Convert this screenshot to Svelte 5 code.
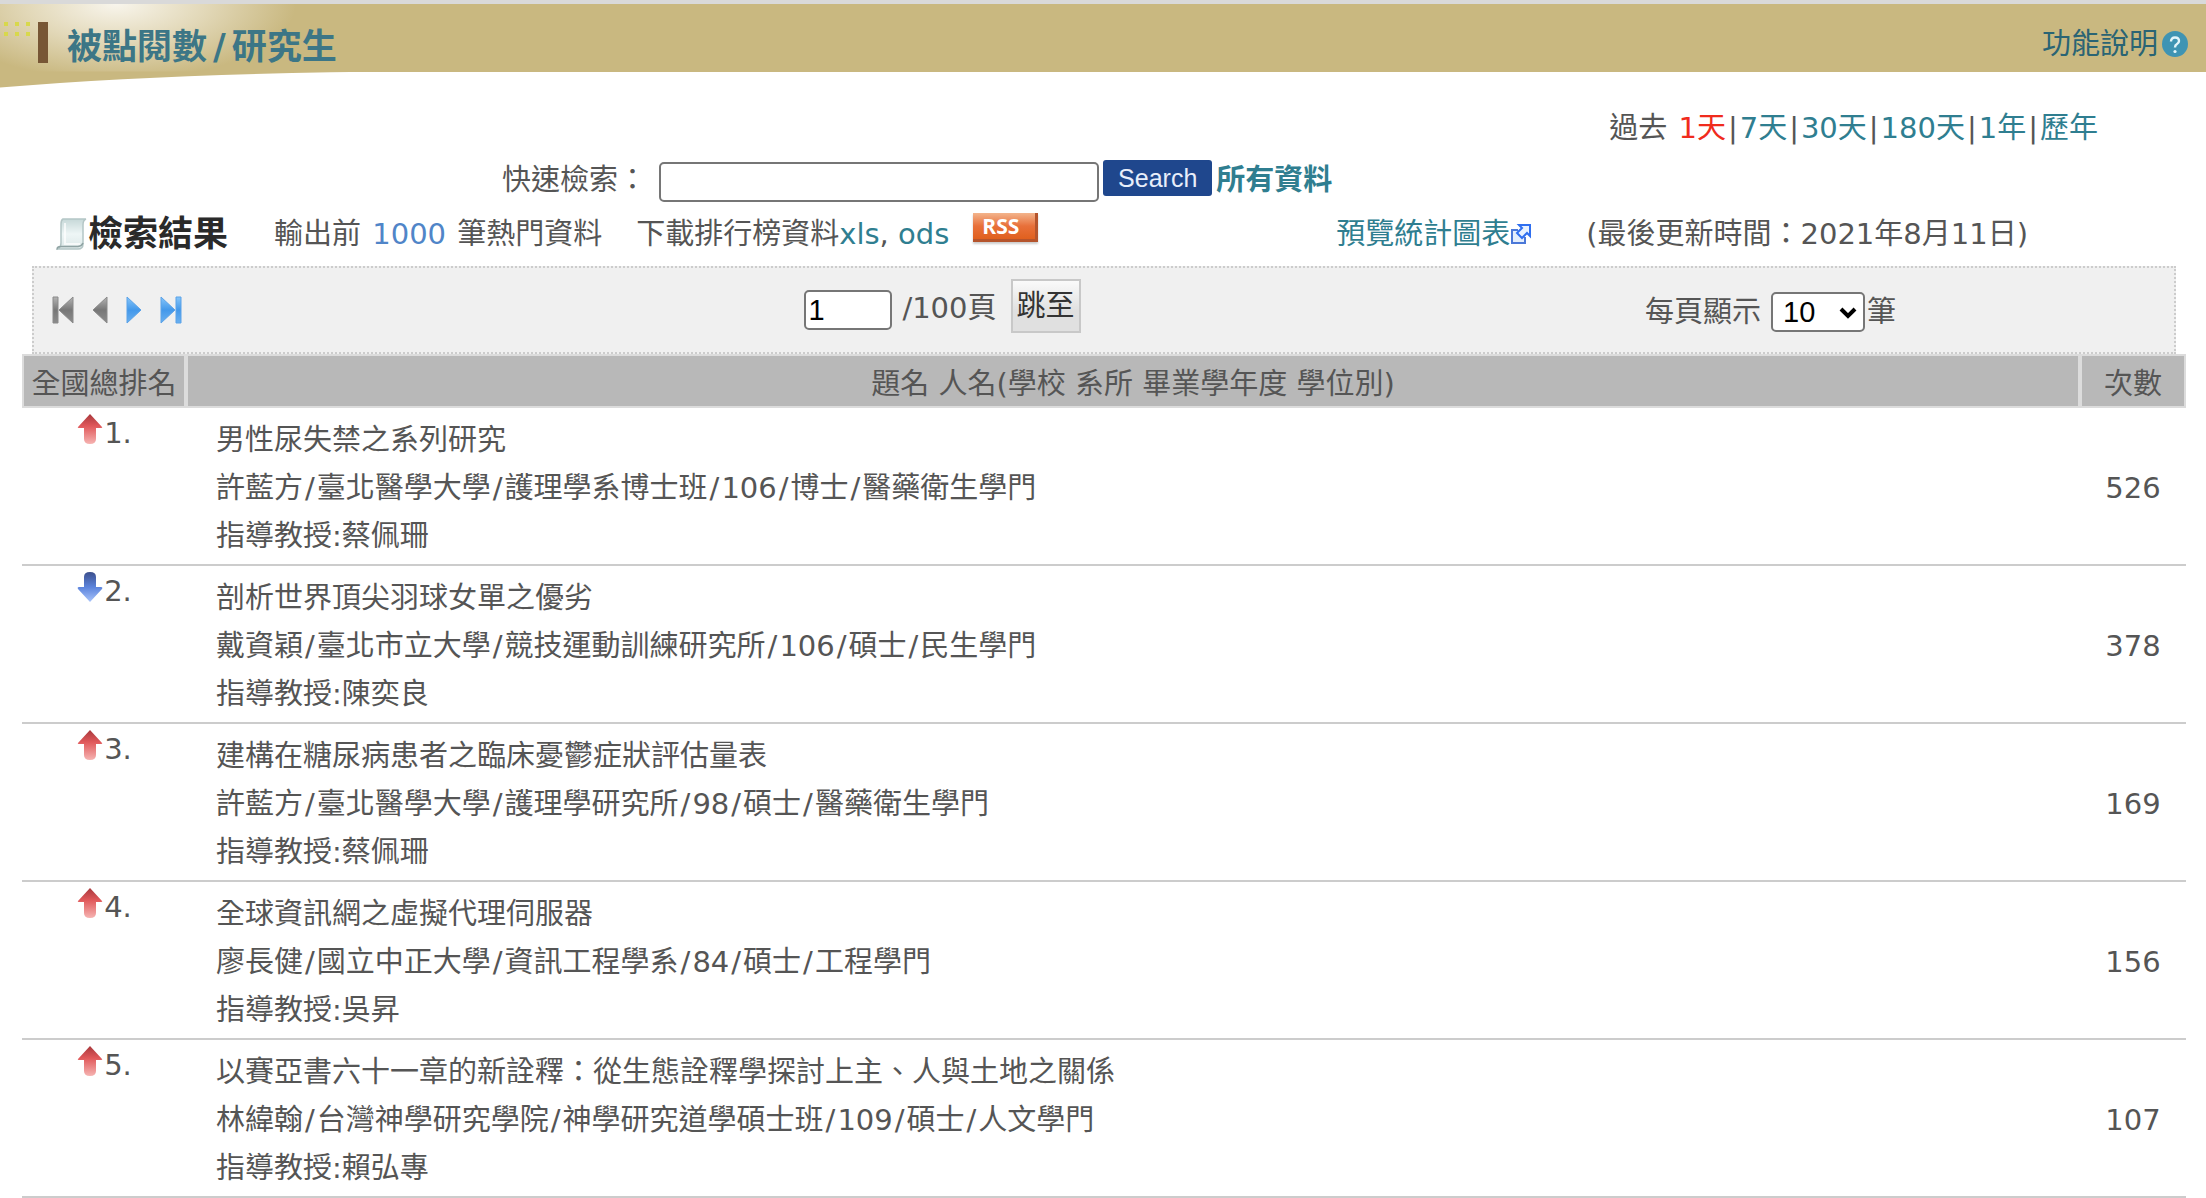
<script lang="ts">
  type Row = {
    rank: number;
    trend: 'up' | 'down';
    title: string;
    detail: string[];
    advisor: string;
    hits: number;
  };

  const ranges = ['1天', '7天', '30天', '180天', '1年', '歷年'];
  let range = $state('1天');
  let keyword = $state('');
  let page = $state('1');
  let pageSize = $state('10');

  const rows: Row[] = [
    { rank: 1, trend: 'up', title: '男性尿失禁之系列研究', detail: ['許藍方', '臺北醫學大學', '護理學系博士班', '106', '博士', '醫藥衛生學門'], advisor: '蔡佩珊', hits: 526 },
    { rank: 2, trend: 'down', title: '剖析世界頂尖羽球女單之優劣', detail: ['戴資穎', '臺北市立大學', '競技運動訓練研究所', '106', '碩士', '民生學門'], advisor: '陳奕良', hits: 378 },
    { rank: 3, trend: 'up', title: '建構在糖尿病患者之臨床憂鬱症狀評估量表', detail: ['許藍方', '臺北醫學大學', '護理學研究所', '98', '碩士', '醫藥衛生學門'], advisor: '蔡佩珊', hits: 169 },
    { rank: 4, trend: 'up', title: '全球資訊網之虛擬代理伺服器', detail: ['廖長健', '國立中正大學', '資訊工程學系', '84', '碩士', '工程學門'], advisor: '吳昇', hits: 156 },
    { rank: 5, trend: 'up', title: '以賽亞書六十一章的新詮釋：從生態詮釋學探討上主、人與土地之關係', detail: ['林緯翰', '台灣神學研究學院', '神學研究道學碩士班', '109', '碩士', '人文學門'], advisor: '賴弘專', hits: 107 }
  ];
</script>

<svg class="defs" width="0" height="0" aria-hidden="true">
  <defs>
    <linearGradient id="red" x1="0" y1="0" x2="0" y2="1">
      <stop offset="0" stop-color="#a8383c" />
      <stop offset="0.4" stop-color="#e0585a" />
      <stop offset="1" stop-color="#f6b4b2" />
    </linearGradient>
    <linearGradient id="blue" x1="0" y1="0" x2="0" y2="1">
      <stop offset="0" stop-color="#3c4f8c" />
      <stop offset="0.5" stop-color="#5b83dc" />
      <stop offset="1" stop-color="#a9c4fa" />
    </linearGradient>
    <linearGradient id="grey-nav" x1="0" y1="0" x2="0" y2="1">
      <stop offset="0" stop-color="#b4b4b4" />
      <stop offset="0.5" stop-color="#777" />
      <stop offset="1" stop-color="#8c8c8c" />
    </linearGradient>
    <linearGradient id="blue-nav" x1="0" y1="0" x2="0" y2="1">
      <stop offset="0" stop-color="#86c6fa" />
      <stop offset="0.5" stop-color="#4398ea" />
      <stop offset="1" stop-color="#6ab0f0" />
    </linearGradient>
    <linearGradient id="paper" x1="0" y1="0" x2="0" y2="1">
      <stop offset="0" stop-color="#c6d8d8" />
      <stop offset="0.5" stop-color="#eef6f6" />
      <stop offset="1" stop-color="#dce8e8" />
    </linearGradient>
  </defs>
</svg>

<header class="banner">
  <div class="banner-bg"></div>
  <svg class="curve" viewBox="0 0 410 16" aria-hidden="true">
    <path d="M0 0H410Q180 1 0 16Z" fill="#c9b880" />
  </svg>
  <svg class="dots" viewBox="0 0 28 16" aria-hidden="true">
    <path d="M2 2h4v4H2zM13 2h4v4h-4zM24 2h4v4h-4zM2 12h4v4H2zM13 12h4v4h-4zM24 12h4v4h-4z" fill="#d8d84c" />
  </svg>
  <span class="marker"></span>
  <h1>被點閱數<span>/</span>研究生</h1>
  <a class="help" href="#help">
    功能說明
    <svg width="26" height="26" viewBox="0 0 26 26" aria-hidden="true">
      <circle cx="13" cy="13" r="13" fill="#3f94b3" />
      <path d="M9 10.500Q9 6.500 13 6.500T17 10Q17 12 15 13T13 16.500" fill="none" stroke="#e4f5fa" stroke-width="2.400" />
      <circle cx="13" cy="20.500" r="1.600" fill="#e4f5fa" />
    </svg>
  </a>
</header>

<main>
  <nav class="ranges">
    過去&nbsp;{#each ranges as r, i}{#if i > 0}|{/if}<a href="#range" class:current={r === range} onclick={() => (range = r)}>{r}</a>{/each}
  </nav>

  <form class="search" onsubmit={(e) => e.preventDefault()}>
    <label for="keyword">快速檢索：</label>
    <input id="keyword" type="text" bind:value={keyword} />
    <button type="submit">Search</button>
    <a href="#all">所有資料</a>
  </form>

  <div class="tools">
    <h2>
      <svg width="32" height="34" viewBox="0 0 32 34" aria-hidden="true">
        <path d="M7 2H30Q27 3 27 8V27Q27 32 22 32H2Q5 30 5 26V7Q5 3 7 2Z" fill="url(#paper)" stroke="#b4c6c6" stroke-width="1.500" />
        <path d="M9 6V27H24" fill="none" stroke="#fff" stroke-width="2" opacity="0.7" />
        <path d="M1 32.500Q1 29 6 29.500H22Q26 29 27 26" fill="none" stroke="#8fa3a3" stroke-width="1.500" />
      </svg>檢索結果
    </h2>
    <span class="export">輸出前 <b>1000</b> 筆熱門資料</span>
    <span class="download">下載排行榜資料<a href="#xls">xls</a>, <a href="#ods">ods</a></span>
    <a class="rss" href="#rss">RSS</a>
    <a class="preview" href="#chart">
      預覽統計圖表<svg width="22" height="22" viewBox="0 0 22 22" aria-hidden="true">
        <path d="M8 7H2V20H15V14" fill="#e4eefc" stroke="#4b78d8" stroke-width="2" />
        <path d="M9 2H20V13L17 10L12 15L7 10L12 5Z" fill="#e8f2ff" stroke="#2f6ff0" stroke-width="2" />
      </svg>
    </a>
    <span class="updated">(最後更新時間：2021年8月11日)</span>
  </div>

  <div class="pager">
    <div class="steps">
      <button type="button" aria-label="第一頁">
        <svg width="22" height="28" viewBox="0 0 22 28"><path d="M1 1H6V27H1ZM21 1V27L7 14Z" fill="url(#grey-nav)" stroke="#8a8a8a" /></svg>
      </button>
      <button type="button" aria-label="上一頁">
        <svg width="16" height="28" viewBox="0 0 16 28"><path d="M15 1V27L1 14Z" fill="url(#grey-nav)" stroke="#8a8a8a" /></svg>
      </button>
      <button type="button" aria-label="下一頁">
        <svg width="16" height="28" viewBox="0 0 16 28"><path d="M1 1V27L15 14Z" fill="url(#blue-nav)" stroke="#5aa2e8" /></svg>
      </button>
      <button type="button" aria-label="最後頁">
        <svg width="22" height="28" viewBox="0 0 22 28"><path d="M21 1H16V27H21ZM1 1V27L15 14Z" fill="url(#blue-nav)" stroke="#5aa2e8" /></svg>
      </button>
    </div>
    <div class="jump">
      <input type="text" aria-label="頁碼" bind:value={page} />
      <span>/100頁</span>
      <button type="button">跳至</button>
    </div>
    <div class="size">
      <label for="size">每頁顯示</label>
      <span class="select">
        <select id="size" bind:value={pageSize}>
          <option>10</option>
          <option>20</option>
          <option>50</option>
        </select>
        <svg width="18" height="12" viewBox="0 0 18 12" aria-hidden="true"><path d="M2 2L9 9L16 2" fill="none" stroke="#000" stroke-width="4" /></svg>
      </span>
      <span>筆</span>
    </div>
  </div>

  <table>
    <thead>
      <tr>
        <th class="col-rank">全國總排名</th>
        <th>題名 人名(學校 系所 畢業學年度 學位別)</th>
        <th class="col-hits">次數</th>
      </tr>
    </thead>
    <tbody>
      {#each rows as row}
        <tr>
          <td class="rank">
            <div>
              {#if row.trend === 'up'}
                <svg width="28" height="32" viewBox="0 0 28 32" aria-hidden="true"><path d="M14 1L26 14Q27 15 25 15H20V26Q20 31 14 31T8 26V15H3Q1 15 2 14Z" fill="url(#red)" /></svg>
              {:else}
                <svg width="28" height="32" viewBox="0 0 28 32" aria-hidden="true"><path d="M14 31L26 18Q27 16 25 16H20V6Q20 1 14 1T8 6V16H3Q1 16 2 18Z" fill="url(#blue)" /></svg>
              {/if}
              <span>{row.rank}.</span>
            </div>
          </td>
          <td class="thesis">
            <div>{row.title}</div>
            <div>{#each row.detail as part, i}{#if i > 0}<span class="slash">/</span>{/if}{part}{/each}</div>
            <div>指導教授:{row.advisor}</div>
          </td>
          <td class="hits">{row.hits}</td>
        </tr>
      {/each}
    </tbody>
  </table>
</main>

<style>
  :global(body) {
    margin: 0;
    background: #fff;
    color: #555;
    font: 29px/48px 'DejaVu Sans', 'Noto Sans CJK TC', sans-serif;
  }

  a {
    color: #2f7e90;
    text-decoration: none;
  }

  .defs {
    position: absolute;
  }

  .banner {
    position: relative;
    display: flex;
    align-items: center;
    height: 68px;
    padding: 0 18px 0 38px;
    border-top: 4px solid #d9d9d9;
  }

  .banner-bg {
    position: absolute;
    z-index: -1;
    inset: 0;
    background: radial-gradient(ellipse 180px 76px at 116px 0, #f8f5ec, #e2d8b8 50%, transparent), #c9b880;
  }

  .curve {
    position: absolute;
    top: 67px;
    left: 0;
    width: 410px;
    height: 17px;
  }

  .dots {
    position: absolute;
    top: 16px;
    left: 2px;
    width: 28px;
    height: 16px;
  }

  .marker {
    width: 10px;
    height: 41px;
    margin-top: 8px;
    background: #775635;
  }

  h1 {
    margin: 18px auto 0 19px;
    color: #3c7686;
    font-size: 35px;
    line-height: 48px;
  }

  h1 span {
    margin: 0 6px;
  }

  .help {
    display: flex;
    align-items: center;
    gap: 4px;
    margin-top: 12px;
    color: #2a6474;
  }

  main {
    padding: 32px 20px 0 22px;
  }

  .ranges {
    padding-right: 86px;
    text-align: right;
  }

  .ranges a {
    margin: 0 2px;
  }

  .ranges .current {
    color: #f02b1d;
  }

  .search {
    display: flex;
    align-items: center;
    padding-left: 22%;
    margin: 4px 0 0 4px;
  }

  .search input,
  .jump input,
  select {
    box-sizing: border-box;
    height: 40px;
    border: 2px solid #767676;
    border-radius: 5px;
    background: #fff;
    color: #000;
    font: 29px 'Liberation Sans', sans-serif;
  }

  .search input {
    width: 440px;
    margin: 4px 4px 0 12px;
  }

  .search button {
    height: 36px;
    margin: 0 4px 4px 0;
    padding: 0 15px;
    border: 0;
    border-radius: 3px;
    background: #1f478d;
    color: #e8eefa;
    font: 25px/36px 'Liberation Sans', sans-serif;
  }

  .search a {
    font-weight: bold;
  }

  .tools {
    display: flex;
    align-items: center;
    margin-top: 6px;
    padding: 0 150px 0 34px;
    white-space: nowrap;
  }

  h2 {
    display: flex;
    align-items: center;
    margin: 0;
    color: #2a2a2a;
    font-size: 35px;
    line-height: 48px;
  }

  .export {
    margin-left: 46px;
  }

  .export b {
    margin: 0 2px;
    color: #5085c8;
    font-weight: normal;
  }

  .download {
    margin-left: 34px;
  }

  .rss {
    margin: 0 auto 14px 24px;
    padding: 0 16px 0 9px;
    border: solid #b5542c;
    border-width: 0 3px 3px 0;
    background: linear-gradient(#f3b48c, #e8703a 50%, #e0601e);
    box-shadow: 0 2px 2px #ccc;
    color: #fff;
    font: bold 21px/26px 'Open Sans', sans-serif;
  }

  .preview {
    display: flex;
    align-items: center;
    margin-right: 54px;
  }

  .updated {
    margin-right: 8px;
  }

  .pager {
    display: grid;
    grid-template-columns: 36% 39% 1fr;
    align-items: center;
    box-sizing: border-box;
    height: 88px;
    margin: 8px 10px 0;
    border: 2px dotted #ccc;
    background: #f0f0f0;
  }

  .steps {
    display: flex;
    gap: 18px;
    padding-left: 18px;
  }

  .steps button {
    display: flex;
    padding: 0;
    border: 0;
    background: none;
  }

  .jump,
  .size {
    display: flex;
    align-items: center;
  }

  .jump input {
    width: 88px;
    margin-right: 10px;
    padding: 0 2px;
  }

  .jump span {
    margin-bottom: 4px;
  }

  .jump button {
    box-sizing: border-box;
    height: 54px;
    margin: 0 0 8px 14px;
    padding: 0 4px;
    border: 2px solid #c8c8c8;
    background: linear-gradient(#fafafa, #e0e0e0 60%);
    color: #333;
    font: 29px/46px 'DejaVu Sans', 'Noto Sans CJK TC', sans-serif;
  }

  .size {
    gap: 2px;
    padding: 4px 0 0 6px;
  }

  .select {
    position: relative;
    display: flex;
    margin-left: 8px;
  }

  select {
    width: 94px;
    padding: 0 10px;
    appearance: none;
  }

  .select svg {
    position: absolute;
    top: 15px;
    right: 8px;
    pointer-events: none;
  }

  table {
    width: 100%;
    border-collapse: separate;
    border-spacing: 0;
    table-layout: fixed;
  }

  th {
    padding: 6px 0 0;
    border: 2px solid #dcdcdc;
    background: #b8b8b8;
    font-weight: normal;
    line-height: 44px;
  }

  .col-rank {
    width: 160px;
  }

  .col-hits {
    width: 102px;
  }

  td {
    padding: 8px 0 4px;
    border-bottom: 2px solid #ccc;
  }

  .rank {
    padding: 1px 0 0;
    vertical-align: top;
  }

  .rank div {
    display: flex;
    justify-content: center;
  }

  .rank svg {
    margin-top: 4px;
  }

  .thesis {
    padding-left: 30px;
  }

  .slash {
    margin: 0 2px;
  }

  .hits {
    text-align: center;
  }
</style>
